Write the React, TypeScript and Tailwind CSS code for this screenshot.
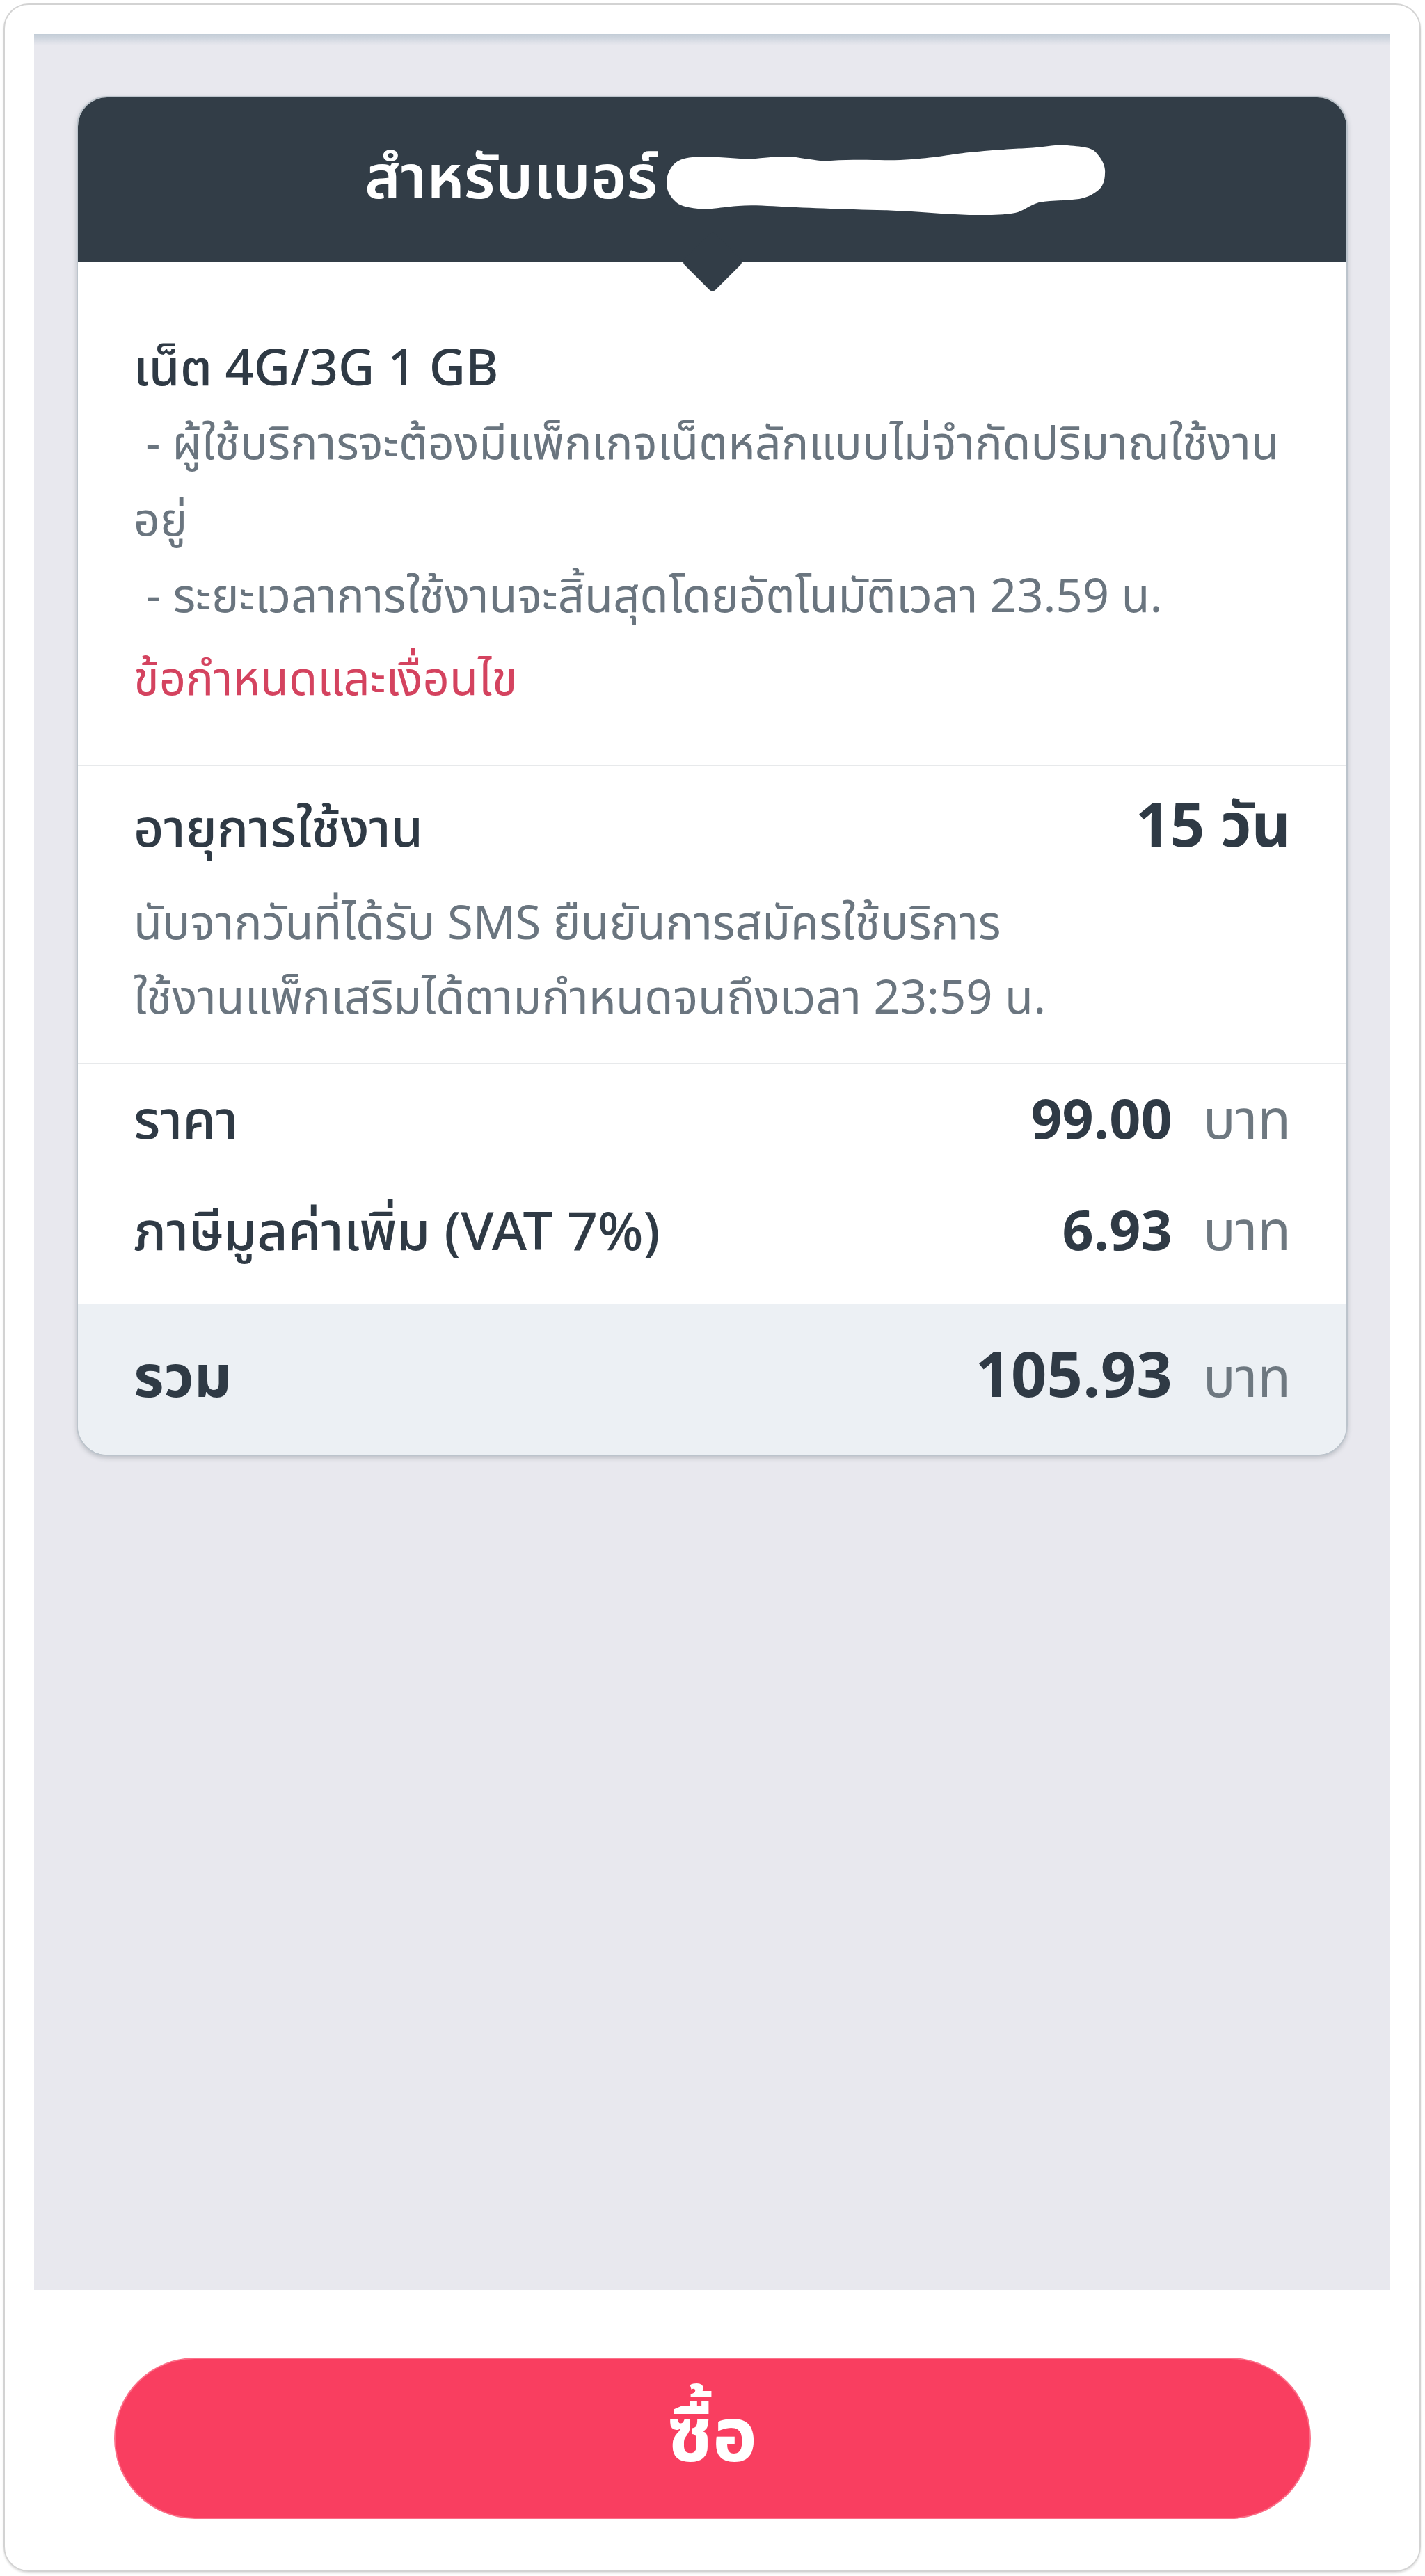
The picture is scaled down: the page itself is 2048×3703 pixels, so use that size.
export default function App() {
  return (
    <div className="w-[2048px] h-[3703px] bg-white pt-[5px] pl-[5px] pr-[6px] pb-[6px] font-['Noto_Sans_Thai','Noto_Sans',sans-serif] text-[#2f3a45]">
      <div className="h-full rounded-[36px] border-2 border-[#d3d3d3] shadow-[0_2px_3px_rgba(0,0,0,0.12)] flex flex-col pt-[42px] px-[42px]">
        {/* gray content area */}
        <div className="h-[3243px] bg-[#e8e8ee] flex flex-col">
          <div className="h-[16px] bg-linear-to-b from-[#c2ccd6] to-[#e8e8ee]" />
          <div className="mt-[73px] mx-[61px] rounded-[44px] border-2 border-[#bcc4cc] bg-white shadow-[0_3px_6px_rgba(60,70,80,0.25)] overflow-hidden">
            {/* header */}
            <div className="relative h-[237px] bg-[#323d47] flex items-center justify-center pl-[66px]">
              <div className="flex items-center">
                <span className="text-white text-[88px] font-semibold leading-none">สำหรับเบอร์</span>
                <svg className="ml-[10px]" width="634" height="102" viewBox="0 0 634 102">
                  <path
                    d="M40 18 C80 16 110 22 131 20 C160 17 175 16 189 18 C215 22 225 24 239 23 C290 20 320 24 355 21 C395 18 410 14 438 11 C480 7 500 6 521 5 C550 3 565 -1 579 1 C605 3 615 5 620 11 C630 22 634 32 633 41 C633 55 628 63 620 68 C612 74 605 76 596 78 C570 81 555 80 538 83 C522 88 515 96 504 98 C480 102 460 101 438 101 C410 100 385 98 355 96 C320 94 300 94 272 93 C240 92 215 91 189 90 C160 89 130 86 106 88 C80 90 62 94 48 92 C30 90 20 87 15 81 C6 72 3 64 3 55 C3 45 6 38 11 31 C18 22 28 19 40 18 Z"
                    fill="#ffffff"
                  />
                </svg>
              </div>
              <div className="absolute left-1/2 bottom-[-31px] -translate-x-1/2 w-[63px] h-[63px] rotate-45 rounded-[6px] bg-[#323d47]" />
            </div>

            {/* package description */}
            <div className="pt-[103px] pb-[65px] px-[80px] border-b-2 border-[#e7e9eb]">
              <div className="text-[72px] leading-[105px] font-medium">เน็ต 4G/3G 1 GB</div>
              <div className="text-[66px] leading-[110px] text-[#6a757f]">
                <div className="whitespace-nowrap">&nbsp;- ผู้ใช้บริการจะต้องมีแพ็กเกจเน็ตหลักแบบไม่จำกัดปริมาณใช้งาน</div>
                <div>อยู่</div>
                <div className="text-[67px]">&nbsp;- ระยะเวลาการใช้งานจะสิ้นสุดโดยอัตโนมัติเวลา 23.59 น.</div>
              </div>
              <div className="mt-[9px] text-[67px] leading-[110px] text-[#d4435f]">ข้อกำหนดและเงื่อนไข</div>
            </div>

            {/* validity */}
            <div className="pt-[40px] pb-[38px] px-[80px] border-b-2 border-[#e7e9eb]">
              <div className="flex justify-between items-baseline">
                <span className="text-[75px] leading-[100px] font-medium">อายุการใช้งาน</span>
                <span className="text-[87px] leading-[100px] font-bold">15 วัน</span>
              </div>
              <div className="mt-[32px] text-[67px] leading-[107px] text-[#6a757f]">
                <div>นับจากวันที่ได้รับ SMS ยืนยันการสมัครใช้บริการ</div>
                <div>ใช้งานแพ็กเสริมได้ตามกำหนดจนถึงเวลา 23:59 น.</div>
              </div>
            </div>

            {/* price */}
            <div className="pt-[33px] pb-[51px] px-[80px] flex flex-col gap-[59px]">
              <div className="flex justify-between items-baseline">
                <span className="text-[77px] leading-[100px] font-medium">ราคา</span>
                <span className="flex items-baseline gap-[44px]">
                  <span className="text-[79px] leading-[100px] font-bold">99.00</span>
                  <span className="text-[78px] leading-[100px] text-[#6e7880]">บาท</span>
                </span>
              </div>
              <div className="flex justify-between items-baseline">
                <span className="text-[77px] leading-[100px] font-medium">ภาษีมูลค่าเพิ่ม (VAT 7%)</span>
                <span className="flex items-baseline gap-[44px]">
                  <span className="text-[79px] leading-[100px] font-bold">6.93</span>
                  <span className="text-[78px] leading-[100px] text-[#6e7880]">บาท</span>
                </span>
              </div>
            </div>

            {/* total */}
            <div className="bg-[#ecf0f4] pt-[51px] pb-[52px] px-[80px] flex justify-between items-baseline">
              <span className="text-[84px] leading-[110px] font-bold">รวม</span>
              <span className="flex items-baseline gap-[44px]">
                <span className="text-[90px] leading-[110px] font-bold">105.93</span>
                <span className="text-[78px] leading-[110px] text-[#6e7880]">บาท</span>
              </span>
            </div>
          </div>
        </div>

        {/* buy button */}
        <div className="pt-[97px] flex justify-center">
          <button className="w-[1720px] h-[232px] rounded-full bg-[#f93e60] border-2 border-[#fb6f88] text-white text-[108px] font-bold flex items-center justify-center">
            ซื้อ
          </button>
        </div>
      </div>
    </div>
  );
}
